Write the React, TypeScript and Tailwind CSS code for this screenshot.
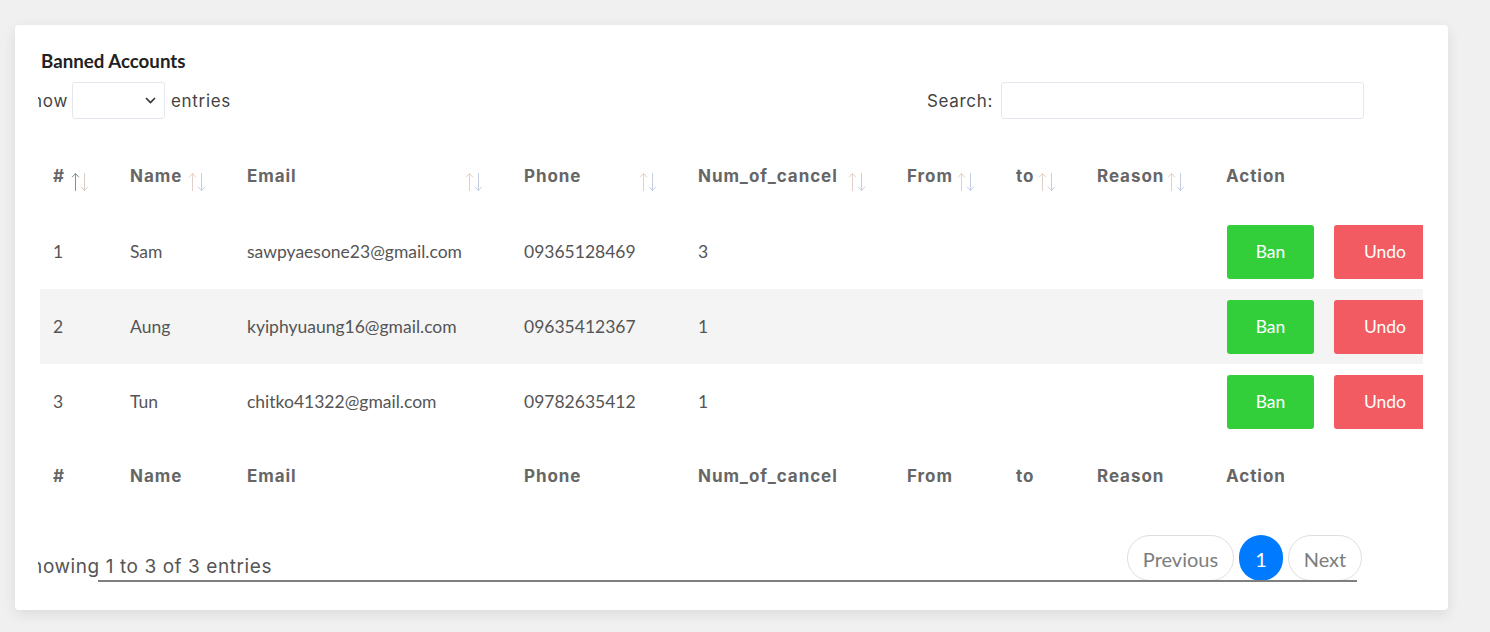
import React from "react";

const cols = [
  { key: "#", w: 77, arrow: 31, active: true },
  { key: "Name", w: 117, arrow: 71 },
  { key: "Email", w: 277, arrow: 231 },
  { key: "Phone", w: 174, arrow: 128 },
  { key: "Num_of_cancel", w: 209, arrow: 163 },
  { key: "From", w: 109, arrow: 63 },
  { key: "to", w: 81, arrow: 35 },
  { key: "Reason", w: 129, arrow: 83 },
  { key: "Action", w: 240, arrow: -1 },
];

const rows = [
  ["1", "Sam", "sawpyaesone23@gmail.com", "09365128469", "3"],
  ["2", "Aung", "kyiphyuaung16@gmail.com", "09635412367", "1"],
  ["3", "Tun", "chitko41322@gmail.com", "09782635412", "1"],
];

const head = { fontFamily: "Inter, 'Noto Sans', sans-serif" };
const body = { fontFamily: "Lato, 'Noto Sans', sans-serif" };

function SortArrows({ left, active }: { left: number; active?: boolean }) {
  const up = active ? "#7a8f9c" : "#e2d0c6";
  const down = active ? "#dccdc3" : "#c4cee0";
  return (
    <svg
      className="absolute top-[33px]"
      style={{ left }}
      width="19"
      height="20"
      viewBox="0 0 19 20"
      fill="none"
      strokeWidth="1"
      strokeLinecap="round"
      strokeLinejoin="round"
    >
      <path d="M4.5 1.5V18.5M1.3 5L4.5 1.5L7.7 5" stroke={up} />
      <path d="M13.5 1.5V18.5M10.3 15L13.5 18.5L16.7 15" stroke={down} />
    </svg>
  );
}

function HeaderRow({ arrows }: { arrows: boolean }) {
  return (
    <tr className="h-[75px]">
      {cols.map((c) => (
        <th
          key={c.key}
          style={{ ...head, width: c.w }}
          className="relative px-[13px] pt-[1px] text-left align-middle text-[17px] tracking-[0.055em] font-bold text-[#666666]"
        >
          <span className="whitespace-nowrap">{c.key}</span>
          {arrows && c.arrow >= 0 && <SortArrows left={c.arrow} active={c.active} />}
        </th>
      ))}
    </tr>
  );
}

export default function App() {
  return (
    <div className="min-h-[632px] w-full bg-[#f0f0f0] pt-[25px] pl-[15px]">
      <div className="w-[1433px] h-[585px] rounded-[4px] bg-white shadow-[0_4px_14px_rgba(0,0,0,0.09)] pl-[23px] pr-[84px] pt-[24px]">
        <h2
          style={{ fontFamily: "Lato, 'Noto Sans', sans-serif" }}
          className="ml-[3px] text-[18.7px] leading-[24px] font-bold text-[#222222]"
        >
          Banned Accounts
        </h2>

        <div className="mt-[9px] flex h-[37px] items-center justify-between overflow-hidden" style={head}>
          <div className="flex items-center">
            <div className="flex w-[30px] justify-end overflow-hidden pt-[3px]">
              <span className="shrink-0 text-[17px] tracking-[0.04em] text-[#444]">Show</span>
            </div>
            <div className="ml-[4px] flex h-[37px] w-[93px] items-center justify-end rounded-[3px] border border-[#e6e6ee] pr-[8px]">
              <svg width="11" height="7" viewBox="0 0 11 7" fill="none">
                <path d="M1 1l4.5 4.5L10 1" stroke="#333" strokeWidth="1.6" />
              </svg>
            </div>
            <span className="ml-[6px] pt-[3px] text-[17px] tracking-[0.04em] text-[#444]">entries</span>
          </div>
          <div className="flex items-center">
            <span className="pt-[3px] text-[17px] tracking-[0.04em] text-[#444]">Search:</span>
            <div className="ml-[8px] h-[37px] w-[363px] rounded-[3px] border border-[#e6e6ee]" />
          </div>
        </div>

        <div className="ml-[2px] mt-[20px] w-[1383px] overflow-hidden">
          <table className="w-[1413px] table-fixed border-collapse">
            <thead>
              <HeaderRow arrows />
            </thead>
            <tbody style={body}>
              {rows.map((r, i) => (
                <tr key={i} className={`h-[75px] ${i === 1 ? "bg-[#f4f4f4]" : "bg-white"}`}>
                  {r.map((v, j) => (
                    <td key={j} className="px-[13px] pt-[2px] text-[17.5px] text-[#555555]">
                      {v}
                    </td>
                  ))}
                  <td className="px-[13px]" />
                  <td className="px-[13px]" />
                  <td className="px-[13px]" />
                  <td className="pl-[14px]">
                    <div className="flex gap-[20px]">
                      <button className="h-[54px] w-[87px] shrink-0 rounded-[3px] bg-[#33cf3a] pt-[1px] text-[17.5px] text-white">
                        Ban
                      </button>
                      <button className="h-[54px] w-[102px] shrink-0 rounded-[3px] bg-[#f35b63] pt-[1px] text-[17.5px] text-white">
                        Undo
                      </button>
                    </div>
                  </td>
                </tr>
              ))}
            </tbody>
            <tfoot>
              <HeaderRow arrows={false} />
            </tfoot>
          </table>
        </div>

        <div className="relative mt-[21px] flex h-[46px] items-end justify-between">
          <div className="flex w-[234px] justify-end overflow-hidden" style={head}>
            <span className="shrink-0 text-[19px] tracking-[0.03em] text-[#555]">Showing 1 to 3 of 3 entries</span>
          </div>
          <div className="mr-[2px] flex items-center gap-[5px] self-stretch" style={body}>
            <button className="h-[46px] w-[107px] rounded-full border border-[#dedede] pt-[2px] text-[20px] text-[#7d7d7d]">
              Previous
            </button>
            <button className="h-[46px] w-[44px] rounded-full bg-[#007bff] pt-[2px] text-[20px] text-white">1</button>
            <button className="h-[46px] w-[74px] rounded-full border border-[#dedede] pt-[2px] text-[20px] text-[#7d7d7d]">
              Next
            </button>
          </div>
          <span className="absolute bottom-[-1px] left-[60px] h-[2px] w-[1259px] bg-[#7f7f7f]" />
        </div>
      </div>
    </div>
  );
}
